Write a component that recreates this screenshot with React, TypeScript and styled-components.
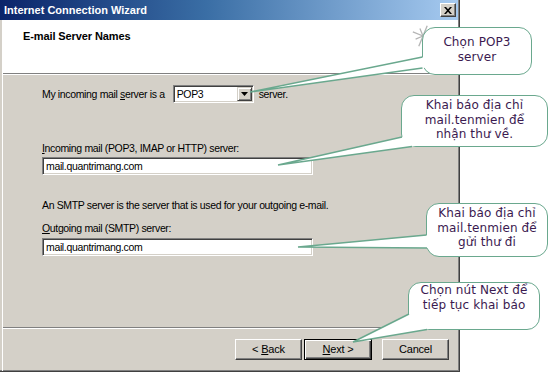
import React from "react";
import styled, { createGlobalStyle } from "styled-components";

const GlobalStyle = createGlobalStyle`
  html, body { margin: 0; padding: 0; background: #ffffff; overflow: hidden; }
  * { box-sizing: border-box; }
`;

const UI_FONT = `"Liberation Sans", Arial, sans-serif`;
const NOTE_FONT = `"DejaVu Sans", Verdana, sans-serif`;
const FACE = "#D4D0C8";

const Stage = styled.div`
  position: relative;
  width: 550px;
  height: 372px;
  background: #ffffff;
  font-family: ${UI_FONT};
  font-size: 10.5px;
  letter-spacing: -0.35px;
  color: #000;
`;

const Window = styled.div`
  width: 460px;
  height: 372px;
  display: flex;
  flex-direction: column;
  background: ${FACE};
  border-right: 1px solid #404040;
  border-bottom: 1px solid #404040;
  box-shadow: inset -1px -1px 0 #808080;
`;

const TitleBar = styled.div`
  height: 20px;
  flex: none;
  margin-right: 1px;
  display: flex;
  align-items: center;
  justify-content: space-between;
  padding: 0 2px 0 4px;
  background: linear-gradient(to right, #0a246a 0%, #3a6ea5 45%, #a6caf0 100%);
`;

const Title = styled.span`
  color: #fff;
  font-weight: bold;
  font-size: 11px;
  letter-spacing: 0;
`;

const CloseButton = styled.div`
  width: 16px;
  height: 14px;
  background: ${FACE};
  border-top: 1px solid #fff;
  border-left: 1px solid #fff;
  border-right: 1px solid #404040;
  border-bottom: 1px solid #404040;
  box-shadow: inset -1px -1px 0 #808080;
  display: flex;
  align-items: center;
  justify-content: center;
`;

const Frame = styled.div`
  flex: 1;
  display: flex;
  flex-direction: column;
  margin-left: 2px;
  margin-right: 1px;
  border-left: 1px solid #ffffff;
`;

const Header = styled.div`
  height: 55px;
  flex: none;
  background: #fff;
  padding: 10px 0 0 20px;
  border-bottom: 1px solid #fff;
  box-shadow: inset 0 -1px 0 #808080;
`;

const HeaderTitle = styled.div`
  font-weight: bold;
  font-size: 11px;
  letter-spacing: -0.1px;
  line-height: 13px;
`;

const Body = styled.div`
  flex: 1;
  padding: 10px 0 0 39px;
  display: flex;
  flex-direction: column;
`;

const Row = styled.div`
  display: flex;
  align-items: center;
  height: 18px;
`;

const Text = styled.div<{ $mt?: number }>`
  margin-top: ${(p) => p.$mt ?? 0}px;
  line-height: 13px;
  white-space: nowrap;
`;

const Key = styled.span`
  text-decoration: underline;
`;

const Sunken = styled.div<{ $w: number; $mt?: number; $ml?: number }>`
  width: ${(p) => p.$w}px;
  height: 18px;
  margin-top: ${(p) => p.$mt ?? 0}px;
  margin-left: ${(p) => p.$ml ?? 0}px;
  background: #fff;
  border-top: 1px solid #808080;
  border-left: 1px solid #808080;
  border-right: 1px solid #fff;
  border-bottom: 1px solid #fff;
  box-shadow: inset 1px 1px 0 #404040, inset -1px -1px 0 ${FACE};
  display: flex;
  align-items: center;
  padding-left: 3px;
  line-height: 13px;
  white-space: nowrap;
`;

const SelectValue = styled.span`
  flex: 1;
`;

const DropButton = styled.div`
  width: 15px;
  height: 14px;
  margin-right: 1px;
  background: ${FACE};
  border-top: 1px solid ${FACE};
  border-left: 1px solid ${FACE};
  border-right: 1px solid #404040;
  border-bottom: 1px solid #404040;
  box-shadow: inset 1px 1px 0 #fff, inset -1px -1px 0 #808080;
  display: flex;
  align-items: center;
  justify-content: center;
`;

const AfterSelect = styled.span`
  margin-left: 5px;
`;

const Footer = styled.div`
  height: 44px;
  flex: none;
  border-top: 1px solid #808080;
  box-shadow: inset 0 1px 0 #fff;
  display: flex;
  justify-content: flex-end;
  align-items: flex-start;
  padding: 11px 9px 0 0;
`;

const Button = styled.div<{ $default?: boolean; $ml?: number }>`
  width: ${(p) => (p.$default ? 68 : 67)}px;
  height: 21px;
  margin-left: ${(p) => p.$ml ?? 0}px;
  background: ${FACE};
  display: flex;
  align-items: center;
  justify-content: center;
  line-height: 13px;
  font-size: 11px;
  letter-spacing: -0.2px;
  white-space: pre;
  border: 1px solid ${(p) => (p.$default ? "#000" : "transparent")};
  border-top-color: ${(p) => (p.$default ? "#000" : "#fff")};
  border-left-color: ${(p) => (p.$default ? "#000" : "#fff")};
  border-right-color: ${(p) => (p.$default ? "#000" : "#404040")};
  border-bottom-color: ${(p) => (p.$default ? "#000" : "#404040")};
  box-shadow: ${(p) =>
    p.$default
      ? "inset 1px 1px 0 #fff, inset -1px -1px 0 #404040, inset -2px -2px 0 #808080"
      : "inset -1px -1px 0 #808080"};
`;

/* ---------- callouts (overlay notes) ---------- */

const Overlay = styled.svg<{ $z: number }>`
  position: absolute;
  left: 0;
  top: 0;
  width: 550px;
  height: 372px;
  pointer-events: none;
  z-index: ${(p) => p.$z};
`;

const Callout = styled.div<{ $x: number; $y: number; $w: number; $h: number; $pt: number }>`
  position: absolute;
  left: ${(p) => p.$x}px;
  top: ${(p) => p.$y}px;
  width: ${(p) => p.$w}px;
  height: ${(p) => p.$h}px;
  z-index: 2;
  padding-top: ${(p) => p.$pt}px;
  background: #fff;
  border: 1.5px solid #6aa88e;
  border-radius: 13px;
  font-family: ${NOTE_FONT};
  font-size: 12px;
  letter-spacing: 0.1px;
  line-height: 14.5px;
  color: #3b1a50;
  text-align: center;
  white-space: nowrap;
`;

type Pt = [number, number];

const callouts: { x: number; y: number; w: number; h: number; pt: number; lines: string[] }[] = [
  { x: 422, y: 27, w: 110, h: 48, pt: 7, lines: ["Chọn POP3", "server"] },
  { x: 401, y: 95, w: 147, h: 52, pt: 2, lines: ["Khai báo địa chỉ", "mail.tenmien để", "nhận thư về."] },
  { x: 426, y: 203, w: 122, h: 54, pt: 2, lines: ["Khai báo địa chỉ", "mail.tenmien để", "gửi thư đi"] },
  { x: 408, y: 282, w: 132, h: 48, pt: 0, lines: ["Chọn nút Next để", "tiếp tục khai báo"] },
];

const tails: { p1: Pt; p2: Pt; tip: Pt }[] = [
  { p1: [422.5, 57], p2: [422.5, 68], tip: [250, 92] },
  { p1: [402, 137], p2: [412, 146.5], tip: [278, 165] },
  { p1: [426.5, 235], p2: [427, 248], tip: [298, 247] },
  { p1: [409, 314], p2: [427, 329.5], tip: [353, 342] },
];

const extend = (p: Pt, tip: Pt, d: number): Pt => {
  const dx = p[0] - tip[0];
  const dy = p[1] - tip[1];
  const len = Math.hypot(dx, dy);
  return [p[0] + (dx / len) * d, p[1] + (dy / len) * d];
};

const pts = (arr: Pt[]) => arr.map((p) => `${p[0]},${p[1]}`).join(" ");

const Star = () => (
  <g stroke="#b4b4b4" strokeWidth="1.3">
    {Array.from({ length: 8 }).map((_, i) => {
      const a = (i * Math.PI) / 4 + Math.PI / 8;
      const r = i % 2 === 0 ? 11 : 8;
      return (
        <line
          key={i}
          x1={423}
          y1={36}
          x2={423 + Math.cos(a) * r}
          y2={36 + Math.sin(a) * r}
        />
      );
    })}
  </g>
);

export default function App() {
  return (
    <>
      <GlobalStyle />
      <Stage>
        <Window>
          <TitleBar>
            <Title>Internet Connection Wizard</Title>
            <CloseButton>
              <svg width="8" height="7" viewBox="0 0 8 7">
                <path d="M0 0h2l2 2.2L6 0h2L5 3.5 8 7H6L4 4.8 2 7H0l3-3.5z" fill="#000" />
              </svg>
            </CloseButton>
          </TitleBar>
          <Frame>
            <Header>
              <HeaderTitle>E-mail Server Names</HeaderTitle>
            </Header>
            <Body>
              <Row>
                <span>
                  My incoming mail <Key>s</Key>erver is a
                </span>
                <Sunken $w={81} $ml={8}>
                  <SelectValue>POP3</SelectValue>
                  <DropButton>
                    <svg width="7" height="4" viewBox="0 0 7 4">
                      <path d="M0 0h7L3.5 4z" fill="#000" />
                    </svg>
                  </DropButton>
                </Sunken>
                <AfterSelect>server.</AfterSelect>
              </Row>
              <Text $mt={39}>
                <Key>I</Key>ncoming mail (POP3, IMAP or HTTP) server:
              </Text>
              <Sunken $w={271} $mt={2}>mail.quantrimang.com</Sunken>
              <Text $mt={24}>An SMTP server is the server that is used for your outgoing e-mail.</Text>
              <Text $mt={10}>
                <Key>O</Key>utgoing mail (SMTP) server:
              </Text>
              <Sunken $w={271} $mt={3}>mail.quantrimang.com</Sunken>
            </Body>
            <Footer>
              <Button>
                {"< "}
                <Key>B</Key>
                {"ack"}
              </Button>
              <Button $default $ml={2}>
                <Key>N</Key>
                {"ext >"}
              </Button>
              <Button $ml={10}>Cancel</Button>
            </Footer>
          </Frame>
        </Window>

        <Overlay $z={1} viewBox="0 0 550 372">
          <Star />
        </Overlay>

        {callouts.map((c, i) => (
          <Callout key={i} $x={c.x} $y={c.y} $w={c.w} $h={c.h} $pt={c.pt}>
            {c.lines.map((l, j) => (
              <div key={j}>{l}</div>
            ))}
          </Callout>
        ))}

        <Overlay $z={3} viewBox="0 0 550 372">
          {tails.map((t, i) => (
            <g key={i}>
              <polygon
                points={pts([extend(t.p1, t.tip, 4), t.tip, extend(t.p2, t.tip, 4)])}
                fill="#fff"
              />
              <polyline
                points={pts([t.p1, t.tip, t.p2])}
                fill="none"
                stroke="#6aa88e"
                strokeWidth="1.5"
                strokeLinejoin="miter"
              />
            </g>
          ))}
        </Overlay>
      </Stage>
    </>
  );
}
